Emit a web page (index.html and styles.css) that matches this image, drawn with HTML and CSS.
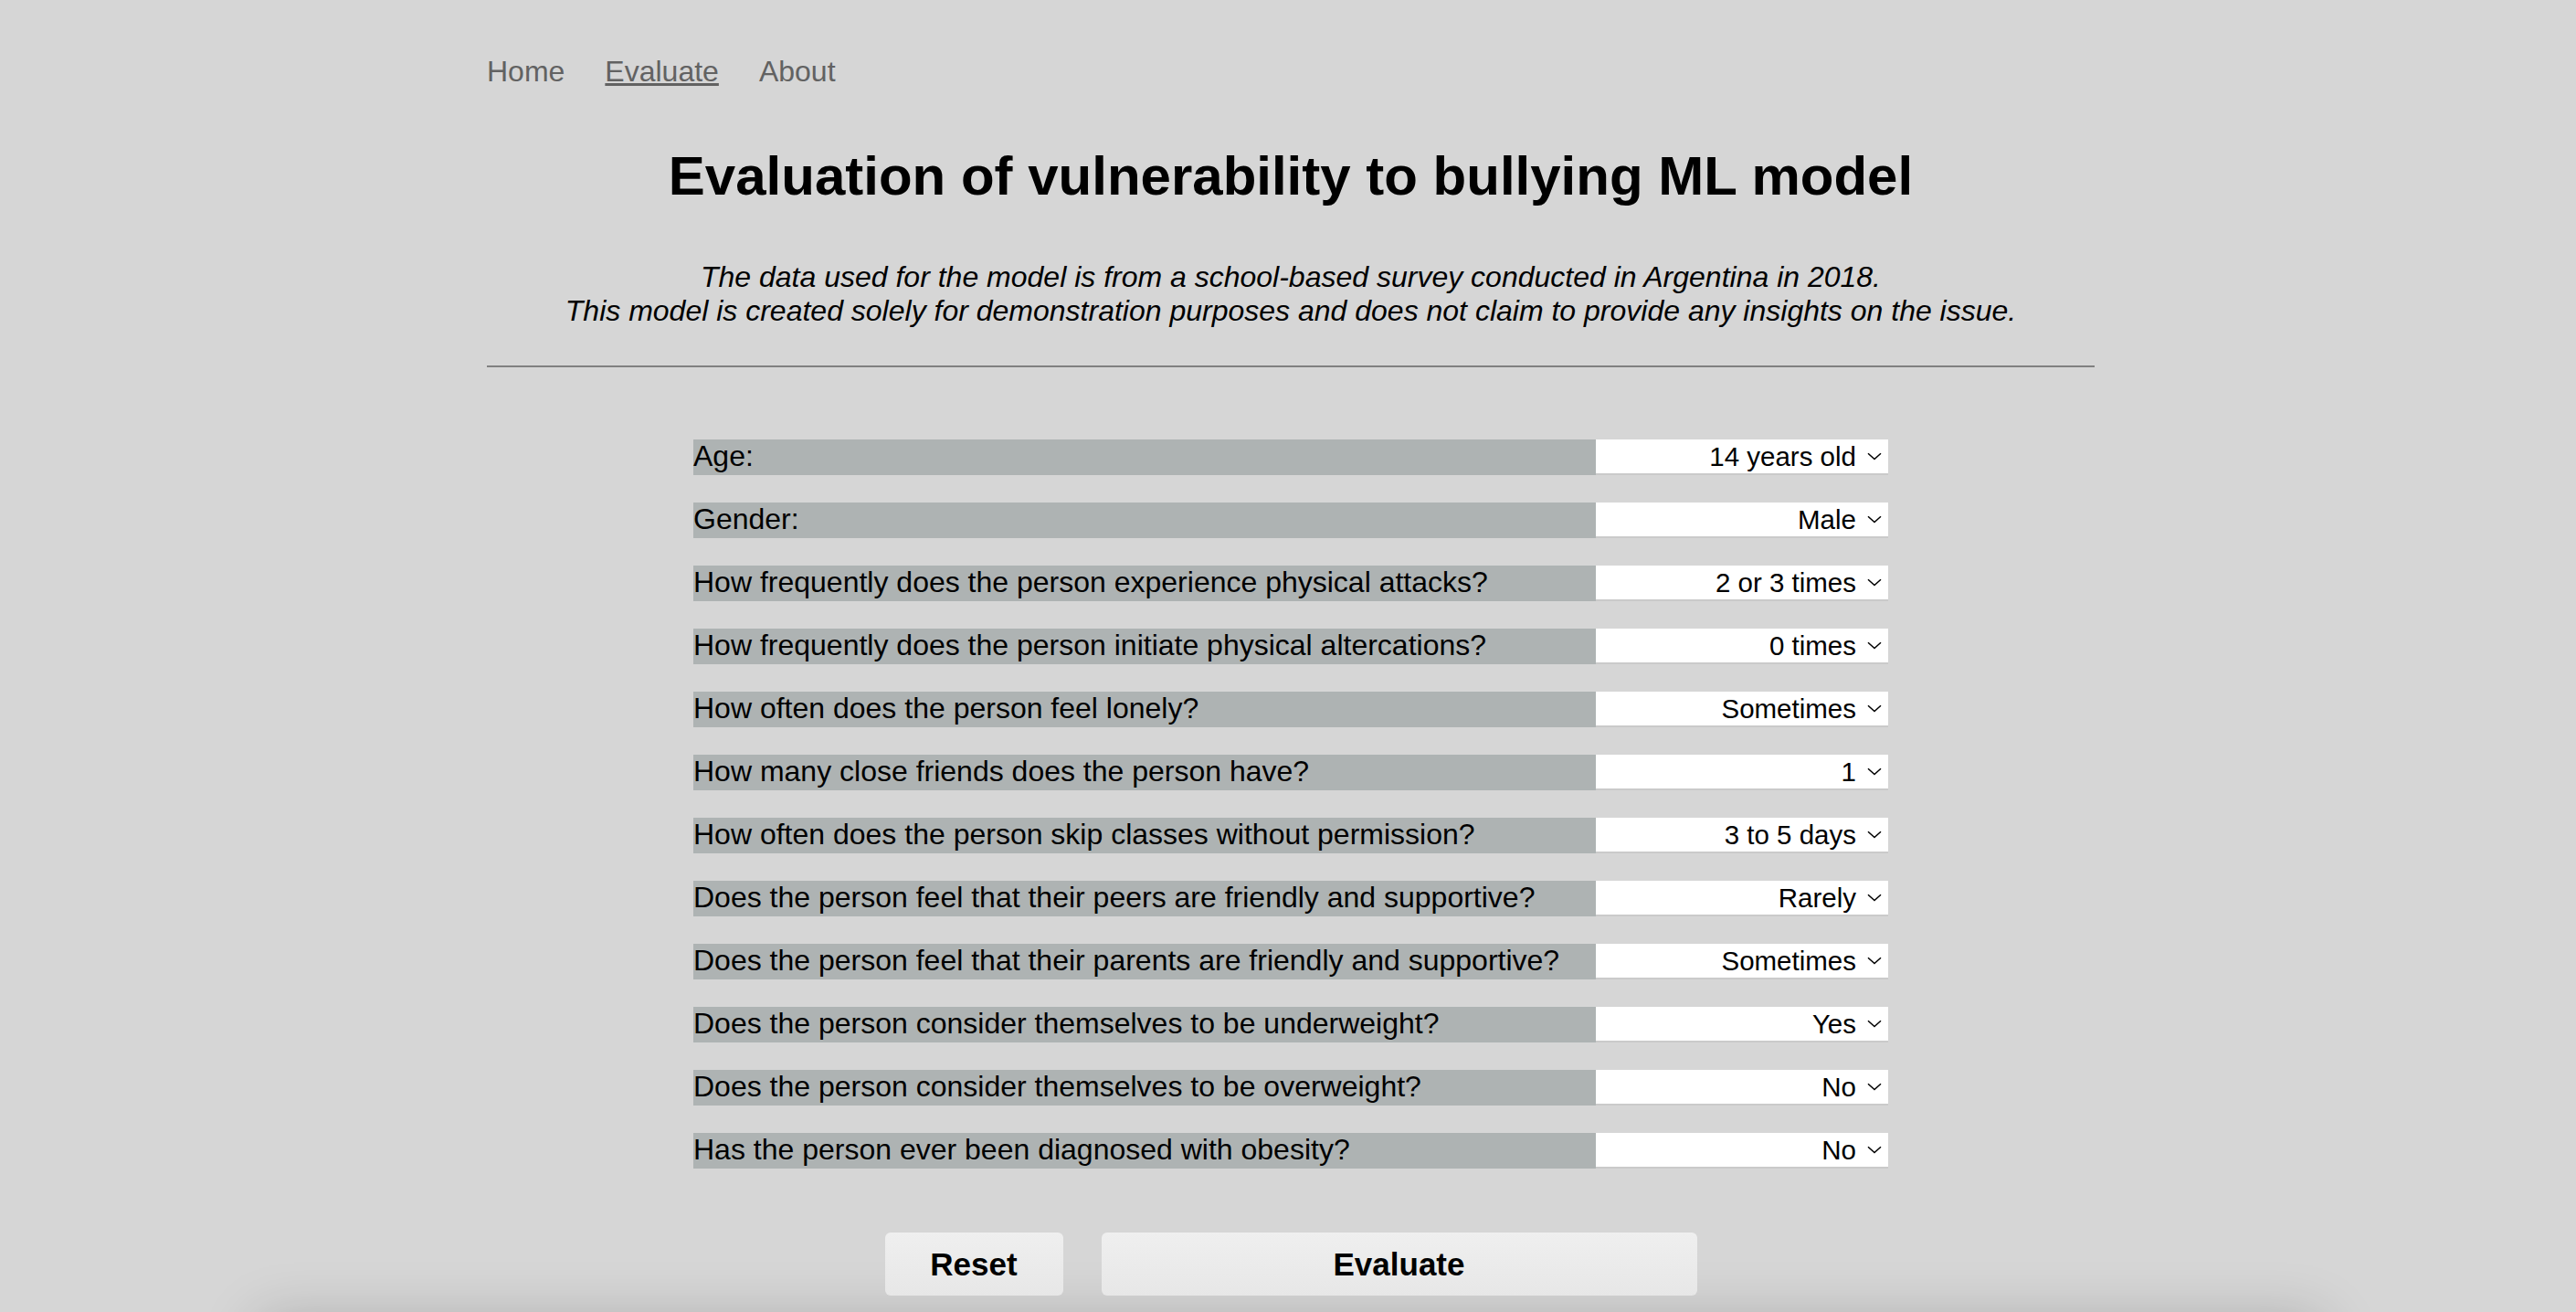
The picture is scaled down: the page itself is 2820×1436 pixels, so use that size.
FILE: index.html
```html
<!DOCTYPE html>
<html lang="en">
<head>
<meta charset="utf-8">
<title>Evaluate</title>
<link rel="stylesheet" href="styles.css">
</head>
<body>
<div class="page">
  <nav class="nav">
    <a class="nav-link" href="#">Home</a>
    <a class="nav-link active" href="#">Evaluate</a>
    <a class="nav-link" href="#">About</a>
  </nav>
  <h1 class="title">Evaluation of vulnerability to bullying ML model</h1>
  <p class="subtitle">The data used for the model is from a school-based survey conducted in Argentina in 2018.<br>This model is created solely for demonstration purposes and does not claim to provide any insights on the issue.</p>
  <div class="rule"></div>
  <form class="form">
    <div class="row"><span class="label">Age:</span><div class="select"><span>14 years old</span><svg class="chev" viewBox="0 0 16 9" width="16" height="9"><path d="M1 1.2 L8 7.6 L15 1.2" fill="none" stroke="#000" stroke-width="1.5"/></svg></div></div>
    <div class="row"><span class="label">Gender:</span><div class="select"><span>Male</span><svg class="chev" viewBox="0 0 16 9" width="16" height="9"><path d="M1 1.2 L8 7.6 L15 1.2" fill="none" stroke="#000" stroke-width="1.5"/></svg></div></div>
    <div class="row"><span class="label">How frequently does the person experience physical attacks?</span><div class="select"><span>2 or 3 times</span><svg class="chev" viewBox="0 0 16 9" width="16" height="9"><path d="M1 1.2 L8 7.6 L15 1.2" fill="none" stroke="#000" stroke-width="1.5"/></svg></div></div>
    <div class="row"><span class="label">How frequently does the person initiate physical altercations?</span><div class="select"><span>0 times</span><svg class="chev" viewBox="0 0 16 9" width="16" height="9"><path d="M1 1.2 L8 7.6 L15 1.2" fill="none" stroke="#000" stroke-width="1.5"/></svg></div></div>
    <div class="row"><span class="label">How often does the person feel lonely?</span><div class="select"><span>Sometimes</span><svg class="chev" viewBox="0 0 16 9" width="16" height="9"><path d="M1 1.2 L8 7.6 L15 1.2" fill="none" stroke="#000" stroke-width="1.5"/></svg></div></div>
    <div class="row"><span class="label">How many close friends does the person have?</span><div class="select"><span>1</span><svg class="chev" viewBox="0 0 16 9" width="16" height="9"><path d="M1 1.2 L8 7.6 L15 1.2" fill="none" stroke="#000" stroke-width="1.5"/></svg></div></div>
    <div class="row"><span class="label">How often does the person skip classes without permission?</span><div class="select"><span>3 to 5 days</span><svg class="chev" viewBox="0 0 16 9" width="16" height="9"><path d="M1 1.2 L8 7.6 L15 1.2" fill="none" stroke="#000" stroke-width="1.5"/></svg></div></div>
    <div class="row"><span class="label">Does the person feel that their peers are friendly and supportive?</span><div class="select"><span>Rarely</span><svg class="chev" viewBox="0 0 16 9" width="16" height="9"><path d="M1 1.2 L8 7.6 L15 1.2" fill="none" stroke="#000" stroke-width="1.5"/></svg></div></div>
    <div class="row"><span class="label">Does the person feel that their parents are friendly and supportive?</span><div class="select"><span>Sometimes</span><svg class="chev" viewBox="0 0 16 9" width="16" height="9"><path d="M1 1.2 L8 7.6 L15 1.2" fill="none" stroke="#000" stroke-width="1.5"/></svg></div></div>
    <div class="row"><span class="label">Does the person consider themselves to be underweight?</span><div class="select"><span>Yes</span><svg class="chev" viewBox="0 0 16 9" width="16" height="9"><path d="M1 1.2 L8 7.6 L15 1.2" fill="none" stroke="#000" stroke-width="1.5"/></svg></div></div>
    <div class="row"><span class="label">Does the person consider themselves to be overweight?</span><div class="select"><span>No</span><svg class="chev" viewBox="0 0 16 9" width="16" height="9"><path d="M1 1.2 L8 7.6 L15 1.2" fill="none" stroke="#000" stroke-width="1.5"/></svg></div></div>
    <div class="row"><span class="label">Has the person ever been diagnosed with obesity?</span><div class="select"><span>No</span><svg class="chev" viewBox="0 0 16 9" width="16" height="9"><path d="M1 1.2 L8 7.6 L15 1.2" fill="none" stroke="#000" stroke-width="1.5"/></svg></div></div>
    <div class="buttons">
      <button type="button" class="btn btn-reset">Reset</button>
      <button type="button" class="btn btn-eval">Evaluate</button>
    </div>
  </form>
</div>
<div class="result-card"></div>
</body>
</html>
```
FILE: styles.css
```css
html {
  overflow: hidden;
}
body {
  margin: 0;
  padding: 0 0 0 6px;
  background: #d6d6d6;
  font-family: "Liberation Sans", Arial, sans-serif;
  color: #000;
}
.page {
  width: 1760px;
  margin: 0 auto;
  padding-top: 60px;
}
.nav {
  display: flex;
  gap: 44px;
  font-size: 32px;
  line-height: normal;
}
.nav-link {
  color: #626262;
  text-decoration: none;
}
.nav-link.active {
  text-decoration: underline;
}
.title {
  margin: 61px 0 0;
  font-size: 60px;
  font-weight: bold;
  text-align: center;
  line-height: normal;
}
.subtitle {
  margin: 58px 0 0;
  font-size: 32px;
  font-style: italic;
  text-align: center;
  line-height: normal;
}
.rule {
  margin-top: 41px;
  height: 2px;
  background: #808080;
}
.form {
  margin-top: 79px;
  display: flex;
  flex-direction: column;
  align-items: center;
  gap: 30px;
}
.row {
  display: flex;
  width: 1308px;
  height: 39px;
}
.label {
  flex: 1;
  background: #aeb3b3;
  font-size: 32px;
  line-height: normal;
  white-space: nowrap;
}
.select {
  width: 320px;
  height: 39px;
  box-sizing: border-box;
  background: #fff;
  border-bottom: 2px solid #cacaca;
  display: flex;
  justify-content: flex-end;
  align-items: center;
  gap: 12px;
  padding: 1px 7px 0 0;
  font-size: 29.5px;
  line-height: normal;
}
.chev {
  display: block;
  margin-top: -2px;
}
.buttons {
  margin-top: 40px;
  display: flex;
  gap: 42px;
}
.btn {
  height: 69px;
  border: none;
  border-radius: 6px;
  background: linear-gradient(#efefef, #e7e7e7);
  font-family: "Liberation Sans", Arial, sans-serif;
  font-size: 35px;
  font-weight: bold;
  color: #000;
  padding: 0;
}
.btn-reset {
  width: 195px;
}
.btn-eval {
  width: 652px;
}
.result-card {
  width: 2260px;
  height: 400px;
  margin: 26px auto 0;
  background: #d6d6d6;
  box-shadow: 0 0 60px rgba(0, 0, 0, 0.2);
}
```
